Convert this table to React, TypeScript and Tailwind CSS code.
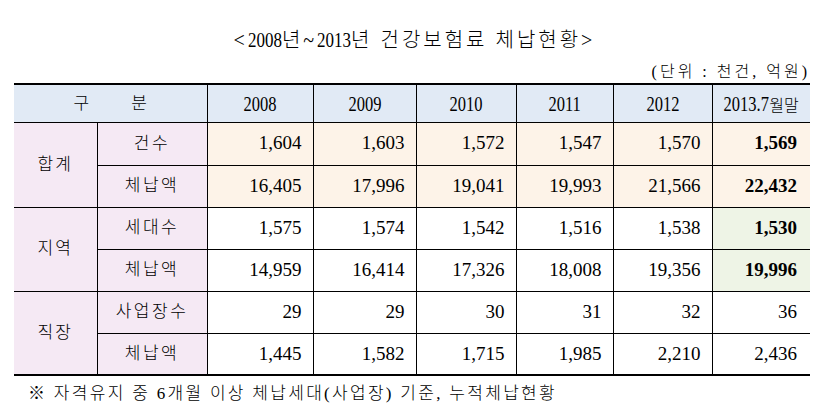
const font = "font-['Liberation_Serif','Noto_Sans_CJK_KR',serif]";

type Row = {
  group?: string;
  span?: number;
  label: string;
  values: string[];
  rowBg: string;
  lastBg: string;
  lastBold: boolean;
  h: string;
  bottom?: boolean;
};

const rows: Row[] = [
  {
    group: "합계",
    span: 2,
    label: "건수",
    values: ["1,604", "1,603", "1,572", "1,547", "1,570", "1,569"],
    rowBg: "bg-[#fdf3e8]",
    lastBg: "bg-[#fdf3e8]",
    lastBold: true,
    h: "h-[43px]",
  },
  {
    label: "체납액",
    values: ["16,405", "17,996", "19,041", "19,993", "21,566", "22,432"],
    rowBg: "bg-[#fdf3e8]",
    lastBg: "bg-[#fdf3e8]",
    lastBold: true,
    h: "h-[42px]",
  },
  {
    group: "지역",
    span: 2,
    label: "세대수",
    values: ["1,575", "1,574", "1,542", "1,516", "1,538", "1,530"],
    rowBg: "bg-white",
    lastBg: "bg-[#eef4e6]",
    lastBold: true,
    h: "h-[42px]",
  },
  {
    label: "체납액",
    values: ["14,959", "16,414", "17,326", "18,008", "19,356", "19,996"],
    rowBg: "bg-white",
    lastBg: "bg-[#eef4e6]",
    lastBold: true,
    h: "h-[42px]",
  },
  {
    group: "직장",
    span: 2,
    label: "사업장수",
    values: ["29", "29", "30", "31", "32", "36"],
    rowBg: "bg-white",
    lastBg: "bg-white",
    lastBold: false,
    h: "h-[42px]",
  },
  {
    label: "체납액",
    values: ["1,445", "1,582", "1,715", "1,985", "2,210", "2,436"],
    rowBg: "bg-white",
    lastBg: "bg-white",
    lastBold: false,
    h: "h-[42px]",
    bottom: true,
  },
];

const years = ["2008", "2009", "2010", "2011", "2012"];

export default function App() {
  return (
    <div className={`w-[829px] h-[417px] bg-white text-black ${font}`}>
      {/* title */}
      <div className="h-[60px] pt-[28px] text-center text-[20px] leading-[24px] tracking-[3px] font-light">
        &lt;<span className="inline-block scale-x-[0.85] -mx-[3px] tracking-normal">2008</span>년~
        <span className="inline-block scale-x-[0.85] -mx-[3px] tracking-normal">2013</span>년 건강보험료 체납현황&gt;
      </div>

      {/* unit */}
      <div className="h-[23px] pr-[19px] text-right text-[16px] leading-[23px] tracking-[3px] font-light">
        (단위 : 천건, 억원)
      </div>

      <table className="ml-[14px] w-[796px] table-fixed border-collapse">
        <colgroup>
          <col className="w-[83px]" />
          <col className="w-[110px]" />
          <col className="w-[106px]" />
          <col className="w-[103px]" />
          <col className="w-[100px]" />
          <col className="w-[97px]" />
          <col className="w-[99px]" />
          <col className="w-[98px]" />
        </colgroup>
        <thead>
          <tr className="h-[38px] bg-[#e1eaf5] border-t-2 border-black text-[22px]">
            <th colSpan={2} className="font-light border-b border-black">
              <div className="flex justify-center gap-[42px] text-[17px]">
                <span>구</span>
                <span>분</span>
              </div>
            </th>
            {years.map((y) => (
              <th
                key={y}
                className="font-normal border border-black border-t-2"
              >
                <span className="inline-block scale-x-[0.75] -mx-[5.5px]">{y}</span>
              </th>
            ))}
            <th className="font-normal border-b border-l border-black border-t-2">
              <span className="inline-block scale-x-[0.75] -mx-[7.5px]">2013.7</span>
              <span className="text-[16px] font-light">월말</span>
            </th>
          </tr>
        </thead>
        <tbody>
          {rows.map((r, i) => (
            <tr
              key={i}
              className={`${r.h} ${r.bottom ? "border-b-2" : "border-b"} border-black`}
            >
              {r.group && (
                <td
                  rowSpan={r.span}
                  className="bg-[#f5e9f4] border-r border-black text-center text-[17px] tracking-[2px] font-light"
                >
                  {r.group}
                </td>
              )}
              <td className="bg-[#f5e9f4] border-r border-black text-center text-[17px] tracking-[2.5px] font-light">
                {r.label}
              </td>
              {r.values.map((v, j) => {
                const last = j === r.values.length - 1;
                return (
                  <td
                    key={j}
                    className={`text-right text-[19px] ${
                      last
                        ? `${r.lastBg} pr-[13px] ${r.lastBold ? "font-bold" : ""}`
                        : `${r.rowBg} pr-[11px] border-r border-black`
                    }`}
                  >
                    {v}
                  </td>
                );
              })}
            </tr>
          ))}
        </tbody>
      </table>

      {/* footnote */}
      <div className="pt-[8px] pl-[28px] text-[17px] leading-[20px] tracking-[2.3px] font-light">
        ※ 자격유지 중 6개월 이상 체납세대(사업장) 기준, 누적체납현황
      </div>
    </div>
  );
}
